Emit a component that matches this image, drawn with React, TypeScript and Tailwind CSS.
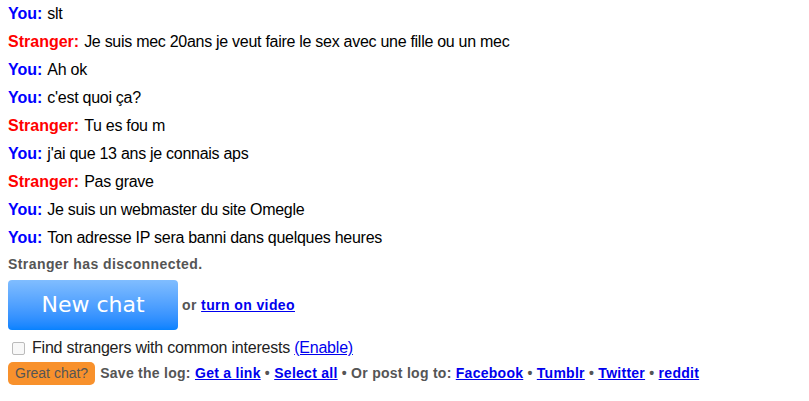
import React from "react";

const lines: { who: "You" | "Stranger"; text: string }[] = [
  { who: "You", text: "slt" },
  { who: "Stranger", text: "Je suis mec 20ans je veut faire le sex avec une fille ou un mec" },
  { who: "You", text: "Ah ok" },
  { who: "You", text: "c'est quoi ça?" },
  { who: "Stranger", text: "Tu es fou m" },
  { who: "You", text: "j'ai que 13 ans je connais aps" },
  { who: "Stranger", text: "Pas grave" },
  { who: "You", text: "Je suis un webmaster du site Omegle" },
  { who: "You", text: "Ton adresse IP sera banni dans quelques heures" },
];

export default function App() {
  return (
    <div className="w-[809px] h-[401px] bg-white px-2 font-['Liberation_Sans',Arial,sans-serif] text-black">
      {/* Chat log */}
      <div className="flex flex-col">
        {lines.map((l, i) => (
          <div key={i} className="h-[28px] flex items-center text-[16px] leading-none">
            <strong className={l.who === "You" ? "text-[#0000ff]" : "text-[#ff0000]"}>{l.who}:</strong>
            <span className="ml-[5px] tracking-[-0.28px]">{l.text}</span>
          </div>
        ))}
        <div className="h-[24px] flex items-center text-[14px] tracking-[0.42px] font-bold text-[#555]">
          Stranger has disconnected.
        </div>
      </div>

      {/* New chat */}
      <div className="mt-[4px] flex items-center gap-[4px]">
        <button className="w-[170px] h-[50px] rounded-[4px] bg-gradient-to-b from-[#80bdff] to-[#0582ff] text-white text-[22px] font-['DejaVu_Sans',sans-serif] leading-none">
          New chat
        </button>
        <span className="text-[14px] tracking-[0.4px] font-bold text-[#555]">
          or{" "}
          <a href="#" className="text-[#0000ee] underline">turn on video</a>
        </span>
      </div>

      {/* Interests */}
      <div className="mt-[9px] h-[18px] flex items-center">
        <span className="ml-[4px] w-[13px] h-[13px] border border-[#bbb] rounded-[2px] bg-[#f8f8f8]"></span>
        <span className="ml-[7px] text-[16px] tracking-[-0.22px] text-[#222]">
          Find strangers with common interests{" "}
          <a href="#" className="text-[#0000ee] underline">(Enable)</a>
        </span>
      </div>

      {/* Log actions */}
      <div className="mt-[5px] flex items-center text-[14px] tracking-[0.27px] font-bold text-[#555]">
        <span className="h-[23px] px-[7px] flex items-center rounded-[5px] bg-[#f8912c] text-[14px] tracking-normal font-normal text-[#555]">
          Great chat?
        </span>
        <span className="ml-[5px]">
          Save the log: <a href="#" className="text-[#0000ee] underline">Get a link</a> •{" "}
          <a href="#" className="text-[#0000ee] underline">Select all</a> • Or post log to:{" "}
          <a href="#" className="text-[#0000ee] underline">Facebook</a> •{" "}
          <a href="#" className="text-[#0000ee] underline">Tumblr</a> •{" "}
          <a href="#" className="text-[#0000ee] underline">Twitter</a> •{" "}
          <a href="#" className="text-[#0000ee] underline">reddit</a>
        </span>
      </div>
    </div>
  );
}
